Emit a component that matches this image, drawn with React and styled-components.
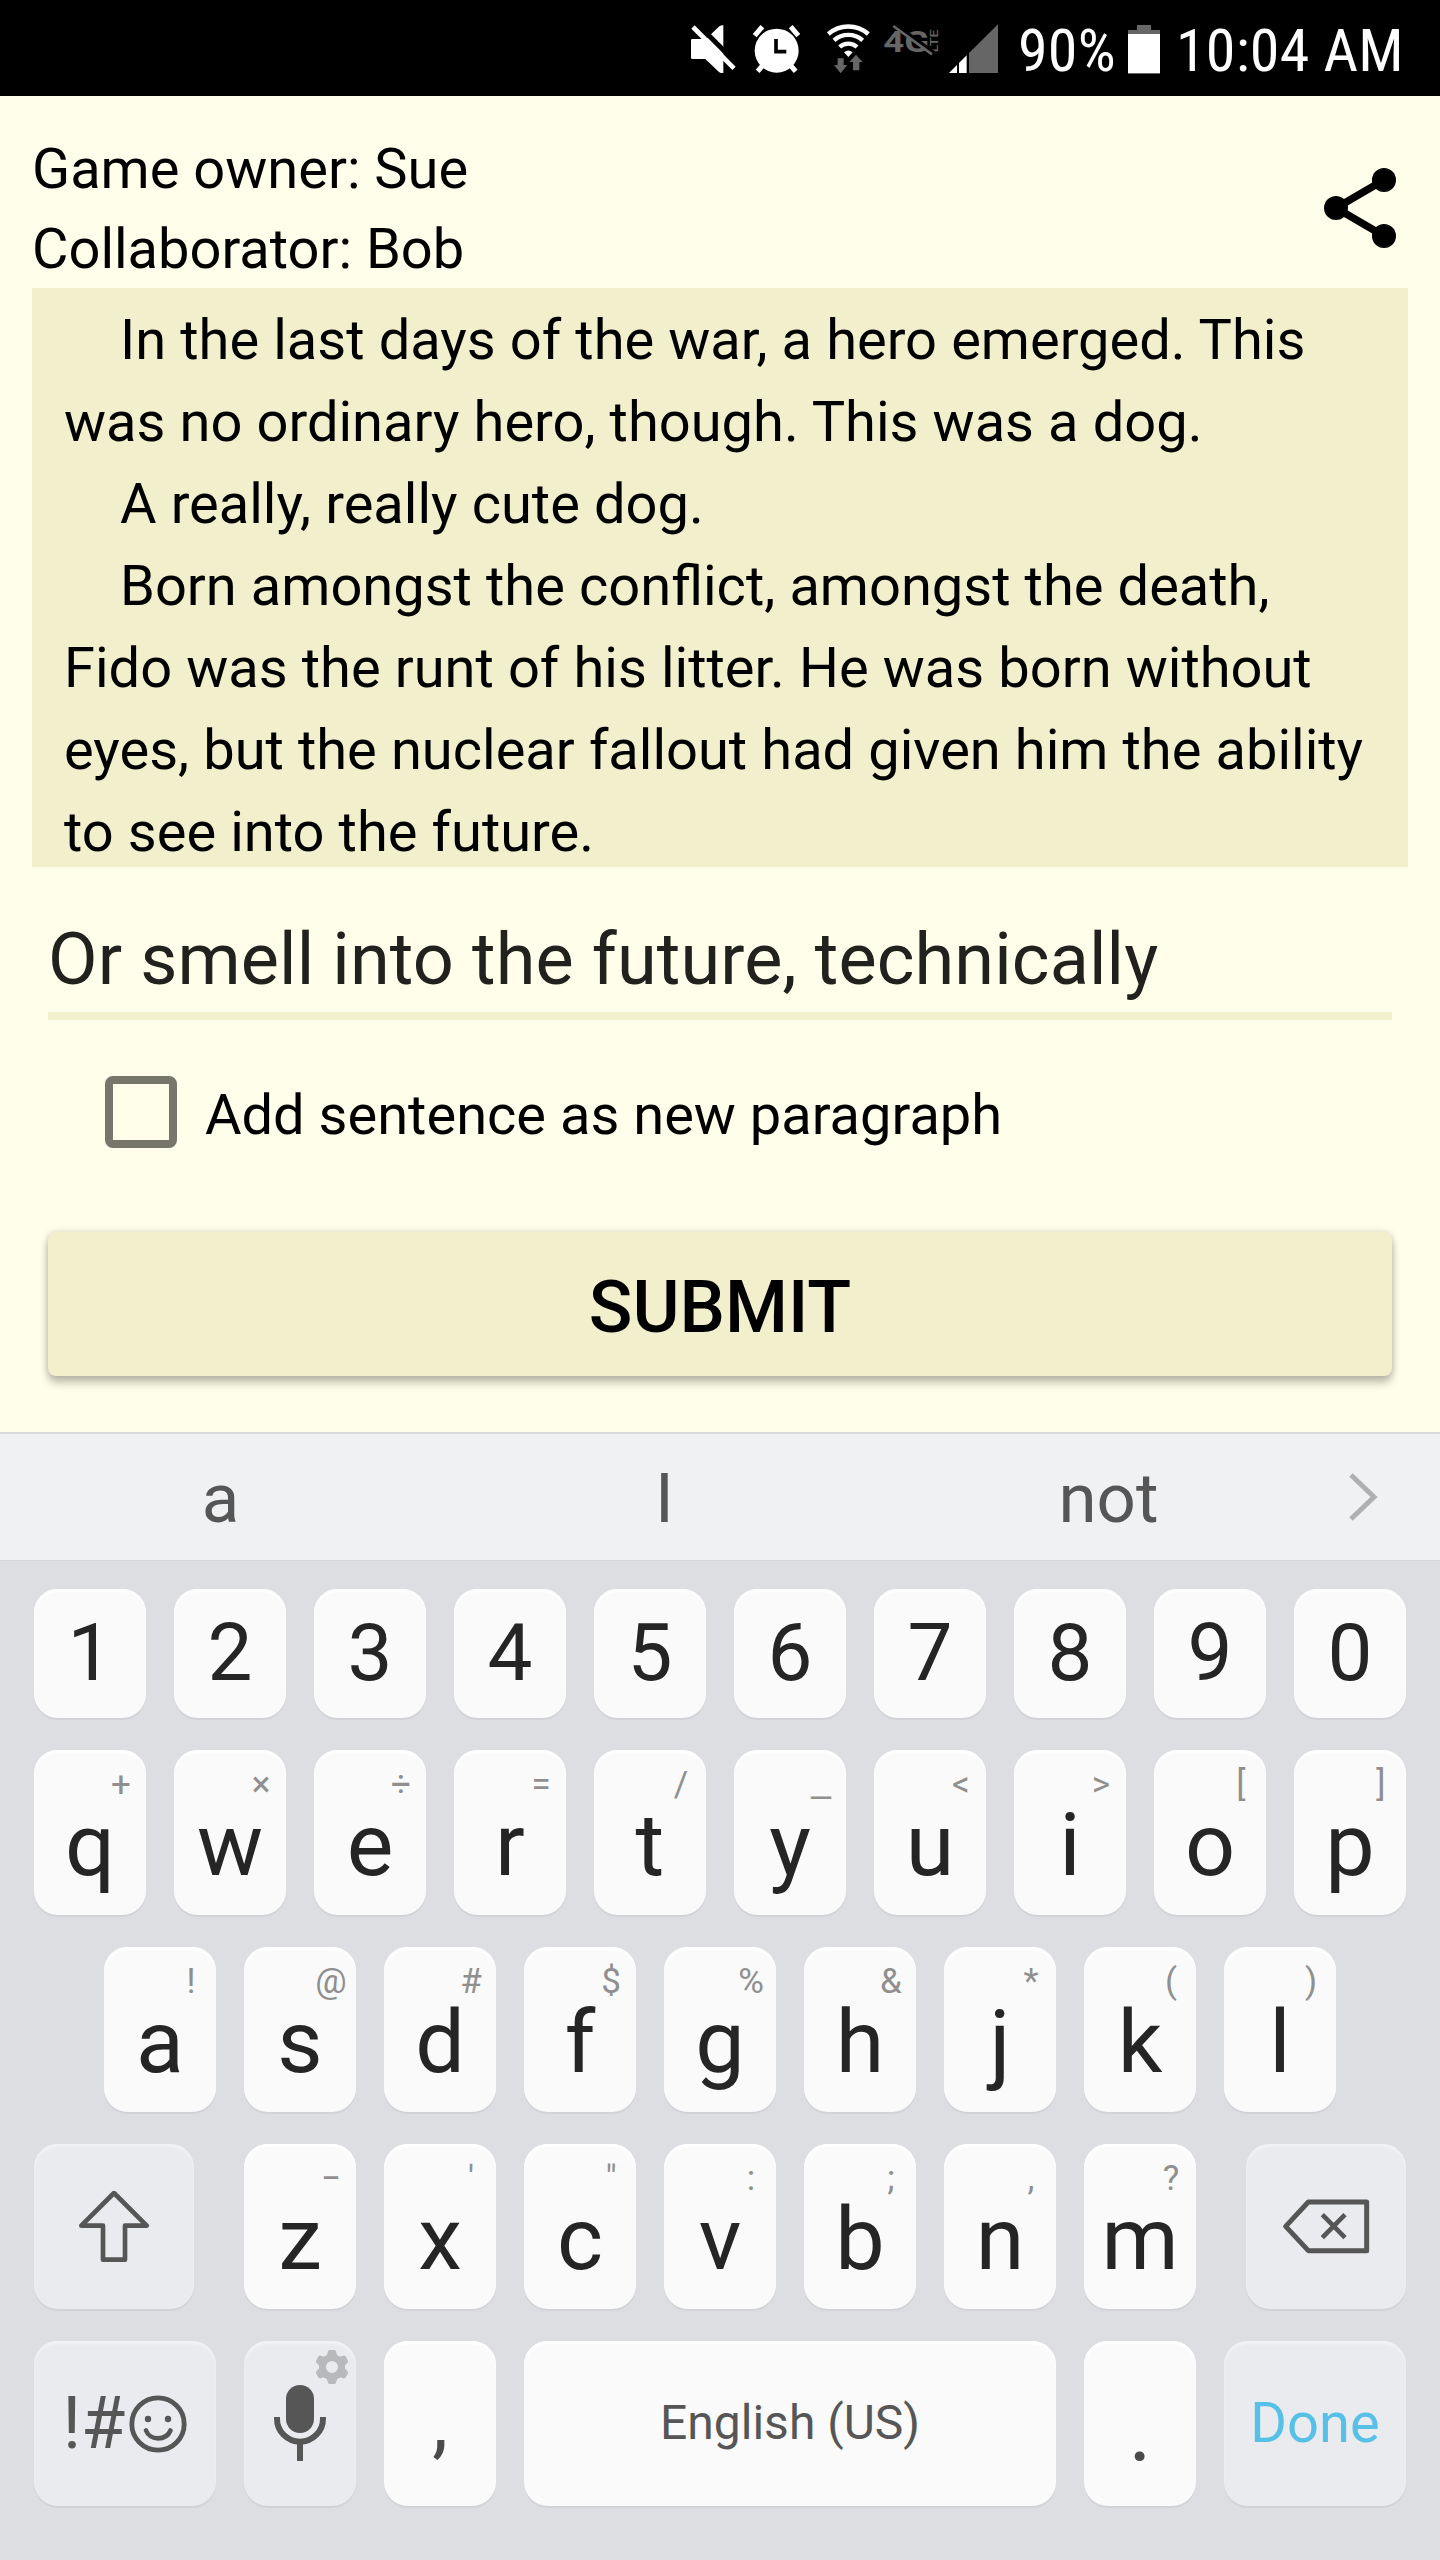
import React from 'react';
import styled, { createGlobalStyle, css } from 'styled-components';

const GlobalStyle = createGlobalStyle`
  *, *::before, *::after { box-sizing: border-box; }
  body { margin: 0; font-family: Roboto, "Liberation Sans", sans-serif; background: #fffeea; }
  svg { display: block; flex: none; }
`;

const Screen = styled.main`
  width: 1440px;
  height: 2560px;
  display: flex;
  flex-direction: column;
  background: #fffeea;
  color: #000;
  overflow: hidden;
`;

/* Status bar */
const StatusBar = styled.header`
  height: 96px;
  flex: none;
  display: flex;
  justify-content: flex-end;
  align-items: center;
  background: #000;
  color: #fff;
`;

const StatusIcons = styled.div`
  display: flex;
  height: 64px;
  margin-top: 8px;
`;

const StatusText = styled.span`
  font-family: "Roboto Condensed", Roboto, sans-serif;
  font-size: 60px;
  line-height: 96px;
  letter-spacing: 0.2px;
  white-space: nowrap;
  width: ${(p) => p.$width}px;
  margin-left: ${(p) => p.$gap}px;
  padding-top: 6px;
`;

const BatteryBox = styled.div`
  margin-top: 3px;
`;

/* Game details */
const GameHeader = styled.section`
  height: 192px;
  flex: none;
  display: flex;
  justify-content: space-between;
  padding: 33px 44px 0 32px;
`;

const Players = styled.div`
  font-size: 56px;
  line-height: 80px;
`;

const ShareButton = styled.button`
  border: 0;
  padding: 0;
  background: none;
  height: 96px;
  margin-top: 31px;
`;

const Story = styled.article`
  flex: none;
  height: 579px;
  margin: 0 32px;
  padding: 11px 32px 0;
  background: #f2efcd;
  font-size: 56px;
  line-height: 82px;
  word-spacing: 0.22px;
  overflow: hidden;

  p { margin: 0; text-indent: 56px; }
`;

const SentenceInput = styled.input`
  flex: none;
  height: 153px;
  margin: 0 48px;
  padding: 39px 0 0;
  border: 0;
  border-bottom: 8px solid #f2efcd;
  outline: 0;
  background: none;
  color: #21211e;
  font: 400 72px Roboto, sans-serif;
  letter-spacing: 0.13px;
`;

const ParagraphOption = styled.label`
  flex: none;
  height: 212px;
  display: flex;
  align-items: flex-start;
  padding: 56px 0 0 105px;
  font-size: 56px;
  line-height: 78px;
`;

const CheckBox = styled.span`
  width: 72px;
  height: 72px;
  margin-right: 28px;
  border: 8px solid #76766b;
  border-radius: 8px;
`;

const SubmitButton = styled.button`
  flex: none;
  height: 144px;
  margin: 0 48px 56px;
  padding: 8px 0 0;
  border: 0;
  border-radius: 8px;
  background: #f2efcd;
  color: #000;
  font: 500 72px/84px Roboto, sans-serif;
  text-transform: uppercase;
  box-shadow: 0 7px 8px rgba(0, 0, 0, 0.24), 0 0 7px rgba(0, 0, 0, 0.16);
`;

/* Keyboard */
const Suggestions = styled.div`
  flex: none;
  height: 128px;
  display: flex;
  align-items: center;
  border-top: 2px solid #d8d9db;
  background: #f0f1f3;
  color: #565656;
  font-size: 69px;
  line-height: 80px;
`;

const Suggestion = styled.span`
  width: 444px;
  padding: 4px 3px 0 0;
  text-align: center;
`;

const MoreButton = styled.button`
  margin: 0 0 0 17px;
  padding: 0;
  border: 0;
  background: none;
`;

const Keyboard = styled.section`
  flex: 1;
  display: flex;
  flex-direction: column;
  gap: 32px;
  padding-top: 29px;
  background: #dddee2;
  box-shadow: inset 0 1px #d6d7da;
`;

const KeyRow = styled.div`
  display: flex;
  justify-content: center;
  gap: 28px;
  height: ${(p) => (p.$short ? 129 : 165)}px;
`;

const Key = styled.div`
  width: ${(p) => p.$width || 112}px;
  height: 100%;
  display: flex;
  flex-direction: column;
  align-items: center;
  justify-content: ${(p) => (p.$centered ? 'center' : 'flex-start')};
  border-radius: 24px;
  background: ${(p) => (p.$tone === 'action' ? '#e9ebef' : '#fafafa')};
  color: #252525;
  ${(p) => p.$margin && css`margin: ${p.$margin};`}
  box-shadow: 0 2px 1px #d1d2d6, 0 0 1px #e6e7ea,
    inset 0 3px 2px ${(p) => (p.$tone === 'action' ? '#f1f2f4' : '#ffffff')};
`;

const Hint = styled.span`
  align-self: flex-end;
  width: 50px;
  height: 40px;
  margin-top: 15px;
  text-align: center;
  color: #8f8f8f;
  font-size: 35px;
  line-height: 40px;
  ${(p) => p.$stretch && css`transform: scaleX(${p.$stretch});`}
`;

const Letter = styled.span`
  font-size: 88px;
  line-height: 80px;
`;

const Digit = styled.span`
  font-size: 80px;
  line-height: 129px;
`;

const Punctuation = styled.span`
  color: #4a4a4a;
  font-size: ${(p) => p.$size}px;
  line-height: 80px;
  margin-top: ${(p) => p.$drop}px;
`;

const SpaceLabel = styled.span`
  color: #565656;
  font-size: 48px;
  line-height: 163px;
`;

const DoneLabel = styled.span`
  color: #57c0e6;
  font-size: 56px;
  line-height: 165px;
`;

const SymbolsLabel = styled.span`
  display: flex;
  align-items: center;
  gap: 4px;
  color: #565656;
  font-size: 72px;
  line-height: 164px;
`;

const GearSlot = styled.span`
  align-self: flex-end;
  width: 49px;
  height: 44px;
  display: flex;
  justify-content: center;
  padding-top: 8px;
`;

const MuteIcon = () => (
  <svg width="66" height="64" viewBox="0 0 198 192">
    <path fill="#fff" d="M33 61Q33 57 37 57H78L118 19Q122 16 130 16V158Q122 161 117 156L76 117H37Q33 117 33 113Z" />
    <path stroke="#000" strokeWidth="15" d="M44 4L174 134" />
    <path stroke="#fff" strokeWidth="14" d="M39 21L162 145" />
  </svg>
);

const AlarmIcon = () => (
  <svg width="67" height="64" viewBox="198 0 201 192">
    <circle cx="290" cy="92" r="66" fill="#fff" />
    <path stroke="#fff" strokeWidth="15" d="M224 47L247 20M332 20L355 47M252 132L233 154M328 132L347 154" />
    <path fill="none" stroke="#000" strokeWidth="11" d="M288 57V95H319" />
  </svg>
);

const WifiIcon = () => (
  <svg width="66" height="64" viewBox="399 0 198 192">
    <g fill="none" stroke="#fff" strokeWidth="13">
      <path d="M445 42A91 91 0 0 1 565 42" />
      <path d="M462 61A65 65 0 0 1 548 61" />
      <path d="M479 81A39 39 0 0 1 531 81" />
    </g>
    <path fill="#fff" d="M505 111L492 97Q505 86 518 97Z" />
    <path fill="#666" d="M473 115H491V135H502L482 160L462 135H473ZM519 151V126H508L528 104L548 126H538V151Z" />
  </svg>
);

const LteIcon = () => (
  <svg width="66" height="64" viewBox="597 0 198 192">
    <g fill="#666" fontFamily="Roboto, sans-serif" fontWeight="700">
      <text x="610" y="95" fontSize="88" textLength="138" lengthAdjust="spacingAndGlyphs">4G</text>
      <text transform="translate(775 97) rotate(-90)" fontSize="34" fontWeight="500" textLength="69" lengthAdjust="spacingAndGlyphs">LTE</text>
    </g>
    <path stroke="#000" strokeWidth="15" d="M644 14L760 99" />
    <path stroke="#666" strokeWidth="8" d="M640 18L756 103" />
  </svg>
);

const SignalIcon = () => (
  <svg width="55" height="64" viewBox="795 0 165 192">
    <path fill="#fff" d="M807 159L831 135V159ZM837 159V129L860 106V159Z" />
    <path fill="#666" d="M867 159V99L954 13V159Z" />
  </svg>
);

const BatteryIcon = () => (
  <svg width="32" height="49" viewBox="0 0 32 49">
    <path fill="#666" d="M9 0H23V5H32V49H0V5H9Z" />
    <path fill="#fff" d="M0 9H32V48H0Z" />
  </svg>
);

const ShareIcon = () => (
  <svg width="72" height="96" viewBox="0 0 72 96">
    <path fill="none" stroke="#000" strokeWidth="7.5" d="M60 20L12 48L60 76" />
    <circle cx="60" cy="20" r="12" />
    <circle cx="12" cy="48" r="12" />
    <circle cx="60" cy="76" r="12" />
  </svg>
);

const ChevronIcon = () => (
  <svg width="30" height="48" viewBox="0 0 30 48">
    <path fill="none" stroke="#afb0b1" strokeWidth="5" d="M2 2L25 24L2 46" />
  </svg>
);

const ShiftIcon = () => (
  <svg width="72" height="72" viewBox="174 182 216 216">
    <path fill="none" stroke="#565656" strokeWidth="14" strokeLinejoin="round" d="M282 188L380 286H315V388H249V286H184Z" />
  </svg>
);

const BackspaceIcon = () => (
  <svg width="88" height="56" viewBox="186 236 264 168">
    <path fill="none" stroke="#565656" strokeWidth="15" strokeLinejoin="round" d="M197 318L265 245H440V391H265Z" />
    <path stroke="#565656" strokeWidth="14" d="M307 283L375 352M375 283L307 352" />
  </svg>
);

const SmileyIcon = () => (
  <svg width="58" height="58" viewBox="0 0 58 58" fill="none" stroke="#565656">
    <circle cx="29" cy="29" r="26.2" strokeWidth="4.8" />
    <path strokeWidth="4.6" strokeLinecap="round" d="M17 35.5C21 46 37 46 41.5 35.5" />
    <circle cx="19" cy="24" r="3.2" fill="#565656" stroke="none" />
    <circle cx="39" cy="24" r="3.2" fill="#565656" stroke="none" />
  </svg>
);

const MicIcon = () => (
  <svg width="54" height="77" viewBox="759 765 162 231">
    <rect x="798" y="765" width="84" height="144" rx="42" fill="#565656" />
    <path fill="none" stroke="#565656" strokeWidth="18" d="M771 861V866A69 69 0 0 0 909 866V861M840 935V993" />
  </svg>
);

const GearIcon = () => (
  <svg width="34" height="36" viewBox="-51 -54 102 108">
    <circle r="28.5" fill="none" stroke="#b7b9bb" strokeWidth="21" />
    {[0, 60, 120, 180, 240, 300].map((a) => (
      <path key={a} transform={`rotate(${a})`} fill="#b7b9bb" d="M-19 -30Q-14 -36 -13 -44Q-12 -51 -6 -51H6Q12 -51 13 -44Q14 -36 19 -30Z" />
    ))}
  </svg>
);

const TOP_ROW = [['q', '+'], ['w', '×'], ['e', '÷'], ['r', '='], ['t', '/'], ['y', '_'], ['u', '<'], ['i', '>'], ['o', '['], ['p', ']']];
const HOME_ROW = [['a', '!'], ['s', '@'], ['d', '#'], ['f', '$'], ['g', '%'], ['h', '&'], ['j', '*'], ['k', '('], ['l', ')']];
const BOTTOM_ROW = [['z', '−'], ['x', "'"], ['c', '"'], ['v', ':'], ['b', ';'], ['n', ','], ['m', '?']];

const LetterKeys = ({ keys }) =>
  keys.map(([letter, hint]) => (
    <Key key={letter}>
      <Hint $stretch={hint === '_' ? 1.3 : undefined}>{hint}</Hint>
      <Letter>{letter}</Letter>
    </Key>
  ));

export default function App() {
  return (
    <Screen>
      <GlobalStyle />
      <StatusBar>
        <StatusIcons>
          <MuteIcon />
          <AlarmIcon />
          <WifiIcon />
          <LteIcon />
          <SignalIcon />
        </StatusIcons>
        <StatusText $gap={18} $width={110}>90%</StatusText>
        <BatteryBox><BatteryIcon /></BatteryBox>
        <StatusText $gap={16} $width={264}>10:04 AM</StatusText>
      </StatusBar>

      <GameHeader>
        <Players>
          <div>Game owner: Sue</div>
          <div>Collaborator: Bob</div>
        </Players>
        <ShareButton aria-label="Share"><ShareIcon /></ShareButton>
      </GameHeader>

      <Story>
        <p>In the last days of the war, a hero emerged. This was no ordinary hero, though. This was a dog.</p>
        <p>A really, really cute dog.</p>
        <p>Born amongst the conflict, amongst the death, Fido was the runt of his litter. He was born without eyes, but the nuclear fallout had given him the ability to see into the future.</p>
      </Story>

      <SentenceInput defaultValue="Or smell into the future, technically" spellCheck={false} />
      <ParagraphOption>
        <CheckBox />
        Add sentence as new paragraph
      </ParagraphOption>
      <SubmitButton>Submit</SubmitButton>

      <Suggestions>
        <Suggestion>a</Suggestion>
        <Suggestion>I</Suggestion>
        <Suggestion>not</Suggestion>
        <MoreButton aria-label="More suggestions"><ChevronIcon /></MoreButton>
      </Suggestions>
      <Keyboard>
        <KeyRow $short>
          {'1234567890'.split('').map((d) => (
            <Key key={d}><Digit>{d}</Digit></Key>
          ))}
        </KeyRow>
        <KeyRow><LetterKeys keys={TOP_ROW} /></KeyRow>
        <KeyRow><LetterKeys keys={HOME_ROW} /></KeyRow>
        <KeyRow>
          <Key $tone="action" $width={160} $centered $margin="0 22px 0 0"><ShiftIcon /></Key>
          <LetterKeys keys={BOTTOM_ROW} />
          <Key $tone="action" $width={160} $centered $margin="0 0 0 22px"><BackspaceIcon /></Key>
        </KeyRow>
        <KeyRow>
          <Key $tone="action" $width={182} $centered><SymbolsLabel>!#<SmileyIcon /></SymbolsLabel></Key>
          <Key $tone="action">
            <GearSlot><GearIcon /></GearSlot>
            <MicIcon />
          </Key>
          <Key><Punctuation $size={80} $drop={41}>,</Punctuation></Key>
          <Key $width={532}><SpaceLabel>English (US)</SpaceLabel></Key>
          <Key><Punctuation $size={88} $drop={49}>.</Punctuation></Key>
          <Key $tone="action" $width={182}><DoneLabel>Done</DoneLabel></Key>
        </KeyRow>
      </Keyboard>
    </Screen>
  );
}
